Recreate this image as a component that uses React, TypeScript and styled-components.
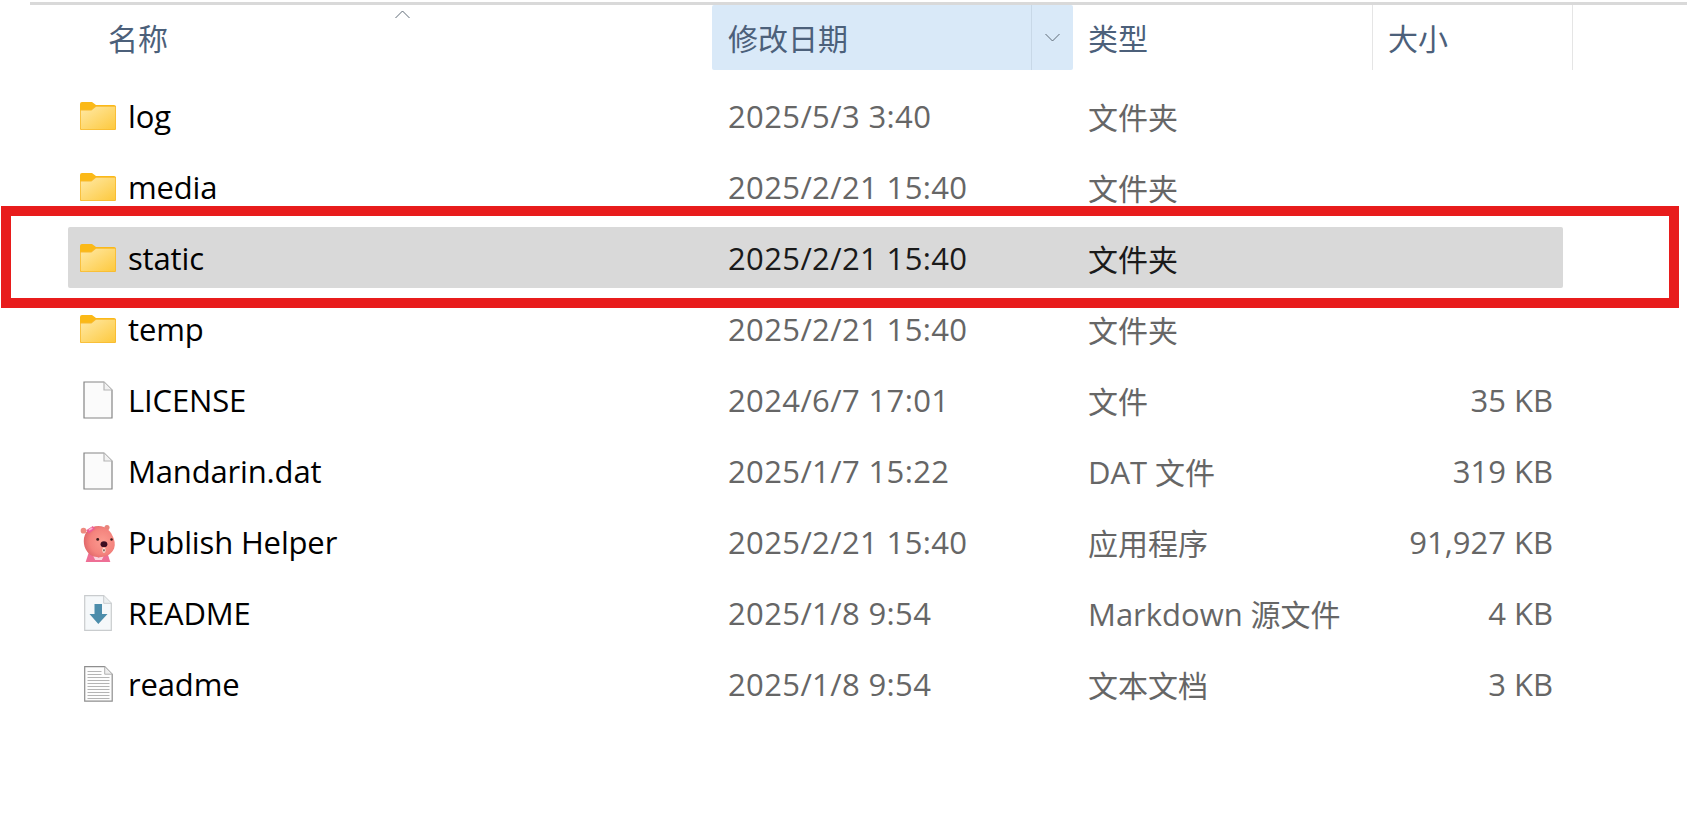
import React from "react";
import styled, { createGlobalStyle } from "styled-components";

const GlobalStyle = createGlobalStyle`
  html, body {
    margin: 0;
    padding: 0;
    background: #fff;
  }
  body {
    font-family: "Open Sans", "Noto Sans CJK SC", sans-serif;
    font-size: 30px;
  }
`;

const NAME_COL = 644;
const DATE_COL = 361;
const TYPE_COL = 299;

const Page = styled.div`
  position: relative;
  width: 1687px;
  height: 830px;
  overflow: hidden;
  background: #fff;
`;

const TopRule = styled.div`
  height: 3px;
  margin: 2px 0 0 30px;
  background: #d9d9d9;
`;

const Header = styled.div`
  display: grid;
  grid-template-columns: ${NAME_COL}px ${DATE_COL}px ${TYPE_COL + 1}px 200px;
  height: 65px;
  margin-left: 68px;
  color: #4c607a;
`;

const HeaderCell = styled.div<{ $pad: number; $active?: boolean; $divider?: boolean }>`
  position: relative;
  display: flex;
  align-items: center;
  height: 65px;
  padding-left: ${(p) => p.$pad}px;
  padding-bottom: 2px;
  box-sizing: border-box;
  background: ${(p) => (p.$active ? "#d9e9f8" : "transparent")};
  border-radius: ${(p) => (p.$active ? "2px" : "0")};
  border-right: ${(p) => (p.$divider ? "1px solid #e5e5e5" : "none")};
`;

const SortCaret = styled.div`
  position: absolute;
  left: 327px;
  top: 5px;
  display: flex;
`;

const DropSplit = styled.div`
  position: absolute;
  top: 0;
  right: 0;
  bottom: 0;
  width: 41px;
  display: flex;
  align-items: center;
  justify-content: center;
  border-left: 1px solid #c8d8e7;
`;

const List = styled.div`
  display: flex;
  flex-direction: column;
  gap: 10px;
  width: 1495px;
  margin: 15px 0 0 68px;
`;

const Row = styled.div<{ $selected?: boolean }>`
  display: grid;
  grid-template-columns: ${NAME_COL}px ${DATE_COL}px ${TYPE_COL}px 181px;
  align-items: center;
  height: 61px;
  border-radius: 2px;
  background: ${(p) => (p.$selected ? "#d9d9d9" : "transparent")};
  color: ${(p) => (p.$selected ? "#1a1a1a" : "#666")};
`;

const NameCell = styled.div`
  display: flex;
  align-items: center;
  padding-left: 12px;
  color: #000;
  font-size: 31px;
  letter-spacing: -0.15px;
`;

const IconBox = styled.div`
  display: flex;
  justify-content: center;
  flex: none;
  width: 36px;
  margin-right: 12px;
`;

const Latin = styled.span`
  font-size: 31px;
`;

const DateCell = styled.div`
  padding-left: 16px;
  font-size: 31px;
  letter-spacing: 0.37px;
`;

const TypeCell = styled.div`
  padding-left: 15px;
`;

const SizeCell = styled.div`
  text-align: right;
  font-size: 31px;
`;

const Highlight = styled.div`
  position: absolute;
  left: 1px;
  top: 206px;
  width: 1678px;
  height: 102px;
  box-sizing: border-box;
  border: 10px solid #e81c1c;
  pointer-events: none;
`;

const FolderIcon = () => (
  <svg width="36" height="28" viewBox="0 0 36 28">
    <defs>
      <linearGradient id="folderFill" x1="0" y1="0" x2="1" y2="1">
        <stop offset="0" stopColor="#ffe9a6" />
        <stop offset="1" stopColor="#fdc93e" />
      </linearGradient>
    </defs>
    <path d="M0 2a2 2 0 0 1 2-2h10l4 3h18a2 2 0 0 1 2 2v6H0z" fill="#fbb917" />
    <path d="M0 8.500a1 1 0 0 1 1-1h10l4.500-3.500H35a1 1 0 0 1 1 1v22a1 1 0 0 1-1 1H1a1 1 0 0 1-1-1z" fill="#f8b92c" />
    <path d="M.8 8.500h10.600L16 4.800h19.200v21.400a1 1 0 0 1-1 1H1.800a1 1 0 0 1-1-1z" fill="url(#folderFill)" />
  </svg>
);

const BlankDoc = () => (
  <svg width="30" height="38" viewBox="0 0 30 38">
    <path d="M1 1h20l8 8v28H1z" fill="#fbfbfb" stroke="#858585" strokeWidth="1.2" />
    <path d="M21 1v8h8" fill="#f2f2f2" stroke="#b5b5b5" strokeWidth="1.2" />
  </svg>
);

const MarkdownDoc = () => (
  <svg width="28" height="36" viewBox="0 0 28 36">
    <path d="M.7.7h19l7.600 7.600v27H.7z" fill="#f5f8fa" stroke="#c9ccce" strokeWidth="1.2" />
    <path d="M19.700.7v7.600h7.600" fill="#eceff0" stroke="#c9ccce" strokeWidth="1" />
    <path d="M10.500 9h7.500v10h5.500L14.300 29 5.500 19h5z" fill="#4c8dab" />
  </svg>
);

const TextDoc = () => (
  <svg width="29" height="36" viewBox="0 0 29 36">
    <path d="M.7.7h20l7.500 7.500v27H.7z" fill="#fdfdfd" stroke="#8e8e8e" strokeWidth="1.2" />
    <path d="M20.700.7v7.500h7.500" fill="#eee" stroke="#b0b0b0" strokeWidth="1" />
    <path
      d="M3.500 5.500h14M3.500 8.500h14M3.500 11.500h22M3.500 14.500h22M3.500 17.500h22M3.500 20.500h22M3.500 23.500h22M3.500 26.500h22M3.500 29.500h22M3.500 32.500h22"
      stroke="#b4b4b4"
      strokeWidth="1"
    />
  </svg>
);

const PetIcon = () => (
  <svg width="38" height="42" viewBox="0 0 38 42">
    <defs>
      <radialGradient id="petSkin" cx="0.6" cy="0.5" r="0.62">
        <stop offset="0" stopColor="#fb9a8f" />
        <stop offset="0.65" stopColor="#f4837d" />
        <stop offset="1" stopColor="#df6468" />
      </radialGradient>
    </defs>
    <path d="M9 33h20l3 9H6z" fill="#ee6f95" />
    <path d="M13 34l6.500 3.500L26 34l-3 6h-7z" fill="#fbd3de" />
    <circle cx="3.700" cy="9" r="3" fill="#ee8a80" />
    <circle cx="28.500" cy="5.700" r="2.700" fill="#e8857c" />
    <path d="M4 20C4 11 10 4 19.500 4 28 4 33 10 35.500 17c2 5.500 1.500 10-1 13.500C31 35.500 26 37 20.500 37c-6 0-10.500-2-13-6C5 27.500 4 24 4 20z" fill="url(#petSkin)" />
    <path d="M6.500 8.500l7-4.500 2.500 3-6.500 5z" fill="#ee5f95" />
    <path d="M9 7.500l3.500-2 1 1.500-3.500 2z" fill="#fbb0cc" />
    <circle cx="18.700" cy="18.300" r="1.500" fill="#3a1a1c" />
    <circle cx="33.300" cy="18.300" r="1.300" fill="#3a1a1c" />
    <ellipse cx="25.300" cy="23.300" rx="3.600" ry="3.100" fill="#3d0d20" />
    <ellipse cx="25.300" cy="29.700" rx="1.700" ry="2.800" fill="#fbe3d6" />
    <ellipse cx="25.300" cy="29.700" rx=".8" ry="1.300" fill="#7d5a50" />
  </svg>
);

const SortChevron = ({ up }: { up?: boolean }) => (
  <svg width="15" height="9" viewBox="0 0 15 9">
    <path d={up ? "M.5 8L7.500 1l7 7" : "M.5 1l7 7 7-7"} fill="none" stroke="#5f6a76" strokeWidth="1" />
  </svg>
);

type FileRow = {
  name: string;
  date: string;
  type: React.ReactNode;
  size?: string;
  icon: React.ReactNode;
  selected?: boolean;
};

const files: FileRow[] = [
  { name: "log", date: "2025/5/3 3:40", type: "文件夹", icon: <FolderIcon /> },
  { name: "media", date: "2025/2/21 15:40", type: "文件夹", icon: <FolderIcon /> },
  { name: "static", date: "2025/2/21 15:40", type: "文件夹", icon: <FolderIcon />, selected: true },
  { name: "temp", date: "2025/2/21 15:40", type: "文件夹", icon: <FolderIcon /> },
  { name: "LICENSE", date: "2024/6/7 17:01", type: "文件", size: "35 KB", icon: <BlankDoc /> },
  { name: "Mandarin.dat", date: "2025/1/7 15:22", type: <><Latin>DAT</Latin> 文件</>, size: "319 KB", icon: <BlankDoc /> },
  { name: "Publish Helper", date: "2025/2/21 15:40", type: "应用程序", size: "91,927 KB", icon: <PetIcon /> },
  { name: "README", date: "2025/1/8 9:54", type: <><Latin>Markdown</Latin> 源文件</>, size: "4 KB", icon: <MarkdownDoc /> },
  { name: "readme", date: "2025/1/8 9:54", type: "文本文档", size: "3 KB", icon: <TextDoc /> },
];

export default function App() {
  return (
    <Page lang="zh-CN">
      <GlobalStyle />
      <TopRule />
      <Header>
        <HeaderCell $pad={40}>
          名称
          <SortCaret>
            <SortChevron up />
          </SortCaret>
        </HeaderCell>
        <HeaderCell $pad={16} $active>
          修改日期
          <DropSplit>
            <SortChevron />
          </DropSplit>
        </HeaderCell>
        <HeaderCell $pad={15} $divider>类型</HeaderCell>
        <HeaderCell $pad={15} $divider>大小</HeaderCell>
      </Header>
      <List>
        {files.map((f) => (
          <Row key={f.name} $selected={f.selected}>
            <NameCell>
              <IconBox>{f.icon}</IconBox>
              {f.name}
            </NameCell>
            <DateCell>{f.date}</DateCell>
            <TypeCell>{f.type}</TypeCell>
            <SizeCell>{f.size}</SizeCell>
          </Row>
        ))}
      </List>
      <Highlight />
    </Page>
  );
}
